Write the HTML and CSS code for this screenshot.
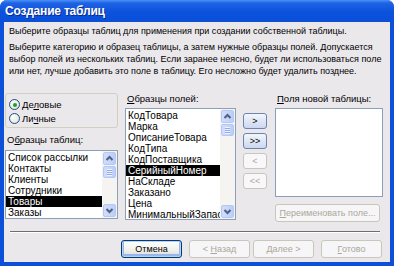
FILE: index.html
```html
<!DOCTYPE html>
<html lang="ru">
<head>
  <meta charset="UTF-8">
  <title>Создание таблиц</title>
  <link rel="stylesheet" href="styles.css">
</head>
<body>
  <div class="window">
    <header class="titlebar">
      <span class="title">Создание таблиц</span>
    </header>

    <div class="dialog">
      <p class="intro">Выберите образцы таблиц для применения при создании собственной таблицы.</p>
      <p class="hint">
        Выберите категорию и образец таблицы, а затем нужные образцы полей. Допускается<br>
        выбор полей из нескольких таблиц. Если заранее неясно, будет ли использоваться поле<br>
        или нет, лучше добавить это поле в таблицу. Его несложно будет удалить позднее.
      </p>

      <div class="main">
        <!-- категория + образцы таблиц -->
        <div class="col col-tables">
          <div class="group">
            <label class="radio-row"><span class="radio checked"></span><span>Де<u>л</u>овые</span></label>
            <label class="radio-row"><span class="radio"></span><span>Ли<u>ч</u>ные</span></label>
          </div>
          <div class="label">О<u>б</u>разцы таблиц:</div>
          <div class="listbox list-tables">
            <ul class="items">
              <li>Список рассылки</li>
              <li>Контакты</li>
              <li>Клиенты</li>
              <li>Сотрудники</li>
              <li class="selected">Товары</li>
              <li>Заказы</li>
            </ul>
            <div class="scrollbar">
              <span class="sb-btn"><svg width="11" height="11" viewBox="0 0 11 11"><polyline points="2.5,7 5.5,4 8.5,7" fill="none" stroke="#4d6185" stroke-width="2"/></svg></span>
              <span class="sb-thumb"></span>
              <span class="sb-track"></span>
              <span class="sb-btn"><svg width="11" height="11" viewBox="0 0 11 11"><polyline points="2.5,4 5.5,7 8.5,4" fill="none" stroke="#4d6185" stroke-width="2"/></svg></span>
            </div>
          </div>
        </div>

        <!-- образцы полей -->
        <div class="col col-fields">
          <div class="label"><u>О</u>бразцы полей:</div>
          <div class="listbox list-fields">
            <ul class="items">
              <li>КодТовара</li>
              <li>Марка</li>
              <li>ОписаниеТовара</li>
              <li>КодТипа</li>
              <li>КодПоставщика</li>
              <li class="selected">СерийныйНомер</li>
              <li>НаСкладе</li>
              <li>Заказано</li>
              <li>Цена</li>
              <li>МинимальныйЗапас</li>
            </ul>
            <div class="scrollbar">
              <span class="sb-btn"><svg width="11" height="11" viewBox="0 0 11 11"><polyline points="2.5,7 5.5,4 8.5,7" fill="none" stroke="#4d6185" stroke-width="2"/></svg></span>
              <span class="sb-thumb"></span>
              <span class="sb-track"></span>
              <span class="sb-btn"><svg width="11" height="11" viewBox="0 0 11 11"><polyline points="2.5,4 5.5,7 8.5,4" fill="none" stroke="#4d6185" stroke-width="2"/></svg></span>
            </div>
          </div>
        </div>

        <!-- перенос полей -->
        <div class="col col-move">
          <button class="btn move">&gt;</button>
          <button class="btn move">&gt;&gt;</button>
          <button class="btn move" disabled>&lt;</button>
          <button class="btn move" disabled>&lt;&lt;</button>
        </div>

        <!-- поля новой таблицы -->
        <div class="col col-new">
          <div class="label"><u>П</u>оля новой таблицы:</div>
          <div class="listbox list-new"></div>
          <button class="btn rename" disabled><u>П</u>ереименовать поле...</button>
        </div>
      </div>

      <div class="separator"></div>

      <footer class="footer">
        <button class="btn default">Отмена</button>
        <button class="btn back" disabled>&lt; <u>Н</u>азад</button>
        <button class="btn next" disabled><u>Д</u>алее &gt;</button>
        <button class="btn finish" disabled><u>Г</u>отово</button>
      </footer>
    </div>
  </div>
</body>
</html>
```

FILE: styles.css
```css
:root {
  --face: #ebe8ec;
  --frame: #0c4fd9;
  --list-border: #8c9fb8;
  --btn-border: #003c74;
  --dis-border: #c9c7ba;
  --dis-text: #aca899;
}
html, body {
  margin: 0;
  padding: 0;
  background: #fff;
}
body {
  font-family: "Liberation Sans", Arial, sans-serif;
  font-size: 9px;
  color: #000;
}
u { text-decoration: underline; }

/* ---- окно ---- */
.window {
  width: 394px;
  height: 266px;
  display: flex;
  flex-direction: column;
  background: var(--frame);
  border-radius: 7px 7px 0 0;
  overflow: hidden;
}
.titlebar {
  height: 22px;
  flex: none;
  display: flex;
  align-items: center;
  padding-left: 5px;
  background: linear-gradient(#4b93f8 0, #1f63e4 3px, #0b52dc 12px, #0a50da 18px, #0d4fd4 22px);
}
.title {
  color: #fff;
  font-weight: bold;
  font-size: 12px;
  letter-spacing: -0.2px;
  text-shadow: 1px 1px #0b2a8c;
}
.dialog {
  flex: 1;
  margin: 0 4px 4px;
  background: var(--face);
  display: flex;
  flex-direction: column;
}

/* ---- тексты ---- */
.intro, .hint {
  margin: 0 0 0 5px;
  line-height: 12px;
  white-space: nowrap;
}
.intro { margin-top: 3px; }
.hint { margin-top: 4px; }

/* ---- основная часть ---- */
.main {
  display: flex;
  margin-top: 16px;
  padding-left: 1px;
}
.col {
  display: flex;
  flex-direction: column;
}
.col-tables { width: 113px; }
.col-fields { width: 111px; margin-left: 7px; }
.col-move { width: 24px; margin-left: 7px; padding-top: 20px; }
.col-new { width: 108px; margin-left: 8px; }

.label {
  line-height: 12px;
  height: 12px;
  padding-left: 2px;
  font-size: 9.5px;
  white-space: nowrap;
}

.group {
  height: 35px;
  box-sizing: border-box;
  border: 1px solid #d0d0bf;
  border-radius: 3px;
  padding: 4px 0 0 3px;
  font-size: 9.5px;
}
.radio-row {
  display: flex;
  align-items: center;
  gap: 2px;
  height: 13px;
  margin-bottom: 1px;
}
.radio {
  width: 9px;
  height: 9px;
  border: 1px solid #1c5180;
  border-radius: 50%;
  background: radial-gradient(circle at 35% 35%, #fff, #dcdcd4);
  display: flex;
  align-items: center;
  justify-content: center;
}
.radio.checked::after {
  content: "";
  width: 4px;
  height: 4px;
  border-radius: 50%;
  background: #21a121;
}
.col-tables .label { margin-top: 6px; }

/* ---- списки ---- */
.listbox {
  display: flex;
  box-sizing: border-box;
  border: 1px solid var(--list-border);
  background: #fff;
  overflow: hidden;
}
.list-tables { height: 69px; margin-top: 4px; }
.list-fields { height: 112px; margin-top: 3px; }
.list-new { height: 89px; margin-top: 3px; }

ul.items {
  flex: 1;
  min-width: 0;
  list-style: none;
  margin: 0;
  padding: 1px 0 0;
  overflow: hidden;
  font-size: 10px;
}
ul.items li {
  height: 11px;
  line-height: 11px;
  padding-left: 2px;
  white-space: nowrap;
}
ul.items li.selected {
  background: #000;
  color: #fff;
}

.scrollbar {
  width: 13px;
  flex: none;
  display: flex;
  flex-direction: column;
  background: #f5f4f1;
  padding: 1px;
  gap: 1px;
}
.sb-btn, .sb-thumb {
  box-sizing: border-box;
  border: 1px solid #b4c8f6;
  border-radius: 2px;
  background: linear-gradient(90deg, #d2ddfb, #bccdf8);
}
.sb-btn {
  height: 13px;
  display: flex;
  align-items: center;
  justify-content: center;
}
.sb-thumb {
  height: 12px;
  background:
    repeating-linear-gradient(#eef3fe 0 1px, #8faae4 1px 2px) center / 5px 7px no-repeat,
    linear-gradient(90deg, #d2ddfb, #bccdf8);
}
.sb-track { flex: 1; }

/* ---- кнопки ---- */
.btn {
  font: inherit;
  color: #000;
  box-sizing: border-box;
  border: 1px solid var(--btn-border);
  border-radius: 3px;
  background: linear-gradient(#ffffff, #f0f0ea 60%, #d8d6ce);
  padding: 0;
  white-space: nowrap;
}
.btn:disabled {
  color: var(--dis-text);
  border-color: var(--dis-border);
  background: #f6f5f7;
}
.btn.move {
  height: 16px;
  width: 24px;
  border-color: #6b84b0;
  background: linear-gradient(#f3f6fc, #cbd8ee);
}
.btn.move + .btn.move { margin-top: 4px; }
.btn.move:nth-child(3) { margin-top: 7px; }
.btn.move:disabled {
  border-color: var(--dis-border);
  background: #f8f7f9;
}
.btn.rename {
  height: 18px;
  margin-top: 7px;
  width: 105px;
}

.separator {
  margin: 9px 10px 0 6px;
  height: 1px;
  background: #6e6e6e;
  border-bottom: 1px solid #fff;
}

.footer {
  display: flex;
  justify-content: flex-end;
  padding-right: 8px;
  margin-top: 7px;
}
.footer .btn {
  width: 61px;
  height: 18px;
}
.footer .back { margin-left: 7px; }
.footer .next { margin-left: 3px; }
.footer .finish { margin-left: 7px; }
.btn.default {
  box-shadow: inset 0 0 0 1px #b9d1f6, inset 0 -1px 0 2px #98b6ee;
}
```
